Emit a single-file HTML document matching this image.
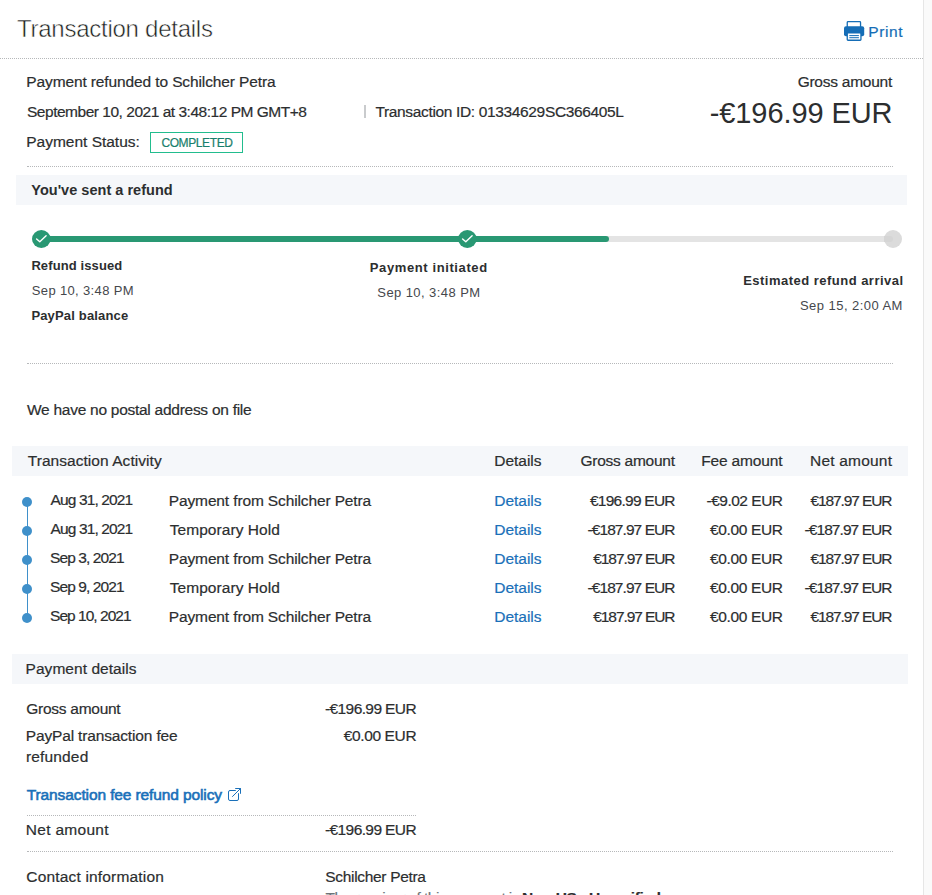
<!DOCTYPE html>
<html lang="en">
<head>
<meta charset="utf-8">
<title>Transaction details</title>
<style>
  html, body { margin: 0; padding: 0; }
  body {
    width: 932px; height: 895px; overflow: hidden; position: relative;
    background: #fff; color: #2c2e2f;
    font-family: "Liberation Sans", sans-serif; font-size: 15px;
  }
  .t { position: absolute; margin: 0; white-space: nowrap; text-decoration: none; -webkit-text-stroke: 0.2px currentColor; }
  .ic { position: absolute; }
  .dot-line { position: absolute; height: 0; border-top: 1px dotted #b6b8ba; }
  .bar { position: absolute; background: #f5f7fa; height: 30px; }
  .scroll-strip { position: absolute; left: 923px; top: 0; width: 9px; height: 895px; background: #fafafa; border-left: 1px solid #e6e6e6; box-sizing: border-box; }
  .bullet { position: absolute; left: 22px; width: 10px; height: 10px; border-radius: 50%; background: #3f90ca; }
  .badge { position: absolute; left: 150px; top: 132px; width: 93px; height: 21px; box-sizing: border-box; border: 1px solid #22bd8e; }
  .track { position: absolute; top: 236px; height: 6px; border-radius: 3px; }
</style>
</head>
<body>
<div class="scroll-strip"></div>

<header>
  <h1 class="t" style="left:17.02px;top:14px;font-size:24px;line-height:30px;letter-spacing:-0.257px;color:#1d1f20;font-weight:normal;-webkit-text-stroke:0.5px #fff;">Transaction details</h1>
  <svg class="ic" style="left:844px;top:20px" width="21" height="22" viewBox="0 0 21 22">
    <rect x="3.25" y="1.65" width="13.3" height="7" rx="0.8" fill="#fff" stroke="#156db6" stroke-width="1.3"/>
    <rect x="0" y="6.3" width="20.2" height="10" rx="2" fill="#156db6"/>
    <rect x="3.25" y="12.9" width="13.7" height="7.35" rx="0.8" fill="#fff" stroke="#156db6" stroke-width="1.3"/>
    <rect x="5.3" y="15.1" width="9.6" height="1" fill="#156db6"/>
    <rect x="5.3" y="17.2" width="9.6" height="1" fill="#156db6"/>
  </svg>
  <a class="t" href="#" style="left:868.19px;top:22px;font-size:15.5px;line-height:20px;letter-spacing:0.622px;color:#156db6;font-weight:normal;">Print</a>
  <div class="dot-line" style="left:0;top:58px;width:923px"></div>
</header>

<section>
  <div class="t" style="left:26.29px;top:72px;font-size:15.5px;line-height:20px;letter-spacing:-0.117px;color:#2c2e2f;font-weight:normal;">Payment refunded to Schilcher Petra</div>
  <div class="t" style="left:27.02px;top:102px;font-size:15.5px;line-height:20px;letter-spacing:-0.48px;color:#2c2e2f;font-weight:normal;">September 10, 2021 at 3:48:12 PM GMT+8</div>
  <div class="ic" style="left:364px;top:105px;width:1.5px;height:13px;background:#c9cbcd"></div>
  <div class="t" style="left:375.46px;top:102px;font-size:15.5px;line-height:20px;letter-spacing:-0.348px;color:#2c2e2f;font-weight:normal;">Transaction ID: 01334629SC366405L</div>
  <div class="t" style="left:26.29px;top:132px;font-size:15.5px;line-height:20px;letter-spacing:-0.015px;color:#2c2e2f;font-weight:normal;">Payment Status:</div>
  <div class="badge"></div>
  <span class="t" style="left:161.4px;top:133px;font-size:12px;line-height:20px;letter-spacing:-0.389px;color:#19806c;font-weight:normal;">COMPLETED</span>
  <div class="t" style="left:797.67px;top:72px;font-size:15.5px;line-height:20px;letter-spacing:-0.252px;color:#2c2e2f;font-weight:normal;">Gross amount</div>
  <div class="t" style="left:709.69px;top:95px;font-size:29px;line-height:36px;letter-spacing:-0.087px;color:#2c2e2f;font-weight:normal;-webkit-text-stroke:0;">-€196.99 EUR</div>
  <div class="dot-line" style="left:27px;top:166px;width:866px"></div>
</section>

<section>
  <div class="bar" style="left:16px;top:175px;width:891px"></div>
  <h2 class="t" style="left:31.27px;top:180px;font-size:14.5px;line-height:20px;letter-spacing:0.021px;color:#2c2e2f;font-weight:700;-webkit-text-stroke:0;">You've sent a refund</h2>
  <div class="track" style="left:41px;width:852px;background:#e4e4e4"></div>
  <div class="track" style="left:41px;width:568px;background:#299873"></div>
  <svg class="ic" style="left:32px;top:230px" width="19" height="18" viewBox="0 0 19 18"><ellipse cx="9.35" cy="9" rx="9.35" ry="9" fill="#299873"/><path d="M4.6 8.9 L7.8 11.8 L14.1 5.7" fill="none" stroke="#fff" stroke-width="1.4" stroke-linecap="round" stroke-linejoin="round"/></svg>
  <svg class="ic" style="left:458px;top:230px" width="19" height="18" viewBox="0 0 19 18"><ellipse cx="9.35" cy="9" rx="9.35" ry="9" fill="#299873"/><path d="M4.6 8.9 L7.8 11.8 L14.1 5.7" fill="none" stroke="#fff" stroke-width="1.4" stroke-linecap="round" stroke-linejoin="round"/></svg>
  <svg class="ic" style="left:884px;top:230px" width="18" height="18" viewBox="0 0 18 18"><circle cx="9" cy="9" r="9" fill="#dbdbdb"/><path d="M0 6 H6 a3 3 0 0 1 0 6 H0 z" fill="#d5d5d5"/></svg>
  <div class="t" style="left:31.39px;top:256px;font-size:13px;line-height:20px;letter-spacing:0.107px;color:#2c2e2f;font-weight:700;-webkit-text-stroke:0;">Refund issued</div>
  <div class="t" style="left:31.79px;top:281px;font-size:13px;line-height:20px;letter-spacing:0.353px;color:#45474c;font-weight:normal;-webkit-text-stroke:0;">Sep 10, 3:48 PM</div>
  <div class="t" style="left:31.39px;top:306px;font-size:13px;line-height:20px;letter-spacing:0.167px;color:#2c2e2f;font-weight:700;-webkit-text-stroke:0;">PayPal balance</div>
  <div class="t" style="left:369.79px;top:258px;font-size:13px;line-height:20px;letter-spacing:0.607px;color:#2c2e2f;font-weight:700;-webkit-text-stroke:0;">Payment initiated</div>
  <div class="t" style="left:377.29px;top:283px;font-size:13px;line-height:20px;letter-spacing:0.424px;color:#45474c;font-weight:normal;-webkit-text-stroke:0;">Sep 10, 3:48 PM</div>
  <div class="t" style="left:743.19px;top:271px;font-size:13px;line-height:20px;letter-spacing:0.481px;color:#2c2e2f;font-weight:700;-webkit-text-stroke:0;">Estimated refund arrival</div>
  <div class="t" style="left:799.99px;top:296px;font-size:13px;line-height:20px;letter-spacing:0.453px;color:#45474c;font-weight:normal;-webkit-text-stroke:0;">Sep 15, 2:00 AM</div>
  <div class="dot-line" style="left:27px;top:363px;width:866px"></div>
</section>

<section>
  <div class="t" style="left:27px;top:400px;font-size:15.5px;line-height:20px;letter-spacing:-0.268px;color:#2c2e2f;font-weight:normal;">We have no postal address on file</div>
</section>

<section>
  <div class="bar" style="left:12px;top:446px;width:896px"></div>
  <h2 class="t" style="left:27.76px;top:451px;font-size:15.5px;line-height:20px;letter-spacing:0.05px;color:#2c2e2f;font-weight:normal;">Transaction Activity</h2>
  <div class="t" style="left:494.29px;top:451px;font-size:15.5px;line-height:20px;letter-spacing:-0.03px;color:#2c2e2f;font-weight:normal;">Details</div>
  <div class="t" style="left:580.52px;top:451px;font-size:15.5px;line-height:20px;letter-spacing:-0.266px;color:#2c2e2f;font-weight:normal;">Gross amount</div>
  <div class="t" style="left:701.29px;top:451px;font-size:15.5px;line-height:20px;letter-spacing:-0.173px;color:#2c2e2f;font-weight:normal;">Fee amount</div>
  <div class="t" style="left:810.04px;top:451px;font-size:15.5px;line-height:20px;letter-spacing:0.198px;color:#2c2e2f;font-weight:normal;">Net amount</div>
  <div class="ic" style="left:26.5px;top:501px;width:1px;height:117px;background:#3f90ca"></div>
  <div class="row">
    <span class="bullet" style="top:496.5px"></span>
    <span class="t" style="left:50.5px;top:490px;font-size:15.5px;line-height:20px;letter-spacing:-0.872px;color:#2c2e2f;font-weight:normal;">Aug 31, 2021</span>
    <span class="t" style="left:168.79px;top:491px;font-size:15.5px;line-height:20px;letter-spacing:-0.13px;color:#2c2e2f;font-weight:normal;">Payment from Schilcher Petra</span>
    <a class="t" href="#" style="left:494.29px;top:491px;font-size:15.5px;line-height:20px;letter-spacing:-0.03px;color:#1a70b9;font-weight:normal;">Details</a>
    <span class="t" style="left:590px;top:491px;font-size:15.5px;line-height:20px;letter-spacing:-0.752px;color:#2c2e2f;font-weight:normal;">€196.99 EUR</span>
    <span class="t" style="left:706.52px;top:491px;font-size:15.5px;line-height:20px;letter-spacing:-0.496px;color:#2c2e2f;font-weight:normal;">-€9.02 EUR</span>
    <span class="t" style="left:810.5px;top:491px;font-size:15.5px;line-height:20px;letter-spacing:-1.102px;color:#2c2e2f;font-weight:normal;">€187.97 EUR</span>
  </div>
  <div class="row">
    <span class="bullet" style="top:525.5px"></span>
    <span class="t" style="left:50.5px;top:519px;font-size:15.5px;line-height:20px;letter-spacing:-0.872px;color:#2c2e2f;font-weight:normal;">Aug 31, 2021</span>
    <span class="t" style="left:169.76px;top:520px;font-size:15.5px;line-height:20px;letter-spacing:0.055px;color:#2c2e2f;font-weight:normal;">Temporary Hold</span>
    <a class="t" href="#" style="left:494.29px;top:520px;font-size:15.5px;line-height:20px;letter-spacing:-0.03px;color:#1a70b9;font-weight:normal;">Details</a>
    <span class="t" style="left:587.52px;top:520px;font-size:15.5px;line-height:20px;letter-spacing:-0.927px;color:#2c2e2f;font-weight:normal;">-€187.97 EUR</span>
    <span class="t" style="left:710px;top:520px;font-size:15.5px;line-height:20px;letter-spacing:-0.348px;color:#2c2e2f;font-weight:normal;">€0.00 EUR</span>
    <span class="t" style="left:804.52px;top:520px;font-size:15.5px;line-height:20px;letter-spacing:-0.927px;color:#2c2e2f;font-weight:normal;">-€187.97 EUR</span>
  </div>
  <div class="row">
    <span class="bullet" style="top:554.5px"></span>
    <span class="t" style="left:50.02px;top:548px;font-size:15.5px;line-height:20px;letter-spacing:-0.899px;color:#2c2e2f;font-weight:normal;">Sep 3, 2021</span>
    <span class="t" style="left:168.79px;top:549px;font-size:15.5px;line-height:20px;letter-spacing:-0.13px;color:#2c2e2f;font-weight:normal;">Payment from Schilcher Petra</span>
    <a class="t" href="#" style="left:494.29px;top:549px;font-size:15.5px;line-height:20px;letter-spacing:-0.03px;color:#1a70b9;font-weight:normal;">Details</a>
    <span class="t" style="left:593.25px;top:549px;font-size:15.5px;line-height:20px;letter-spacing:-1.077px;color:#2c2e2f;font-weight:normal;">€187.97 EUR</span>
    <span class="t" style="left:710px;top:549px;font-size:15.5px;line-height:20px;letter-spacing:-0.348px;color:#2c2e2f;font-weight:normal;">€0.00 EUR</span>
    <span class="t" style="left:810.5px;top:549px;font-size:15.5px;line-height:20px;letter-spacing:-1.102px;color:#2c2e2f;font-weight:normal;">€187.97 EUR</span>
  </div>
  <div class="row">
    <span class="bullet" style="top:583.5px"></span>
    <span class="t" style="left:50.02px;top:577px;font-size:15.5px;line-height:20px;letter-spacing:-0.899px;color:#2c2e2f;font-weight:normal;">Sep 9, 2021</span>
    <span class="t" style="left:169.76px;top:578px;font-size:15.5px;line-height:20px;letter-spacing:0.055px;color:#2c2e2f;font-weight:normal;">Temporary Hold</span>
    <a class="t" href="#" style="left:494.29px;top:578px;font-size:15.5px;line-height:20px;letter-spacing:-0.03px;color:#1a70b9;font-weight:normal;">Details</a>
    <span class="t" style="left:587.52px;top:578px;font-size:15.5px;line-height:20px;letter-spacing:-0.927px;color:#2c2e2f;font-weight:normal;">-€187.97 EUR</span>
    <span class="t" style="left:710px;top:578px;font-size:15.5px;line-height:20px;letter-spacing:-0.348px;color:#2c2e2f;font-weight:normal;">€0.00 EUR</span>
    <span class="t" style="left:804.52px;top:578px;font-size:15.5px;line-height:20px;letter-spacing:-0.927px;color:#2c2e2f;font-weight:normal;">-€187.97 EUR</span>
  </div>
  <div class="row">
    <span class="bullet" style="top:612.5px"></span>
    <span class="t" style="left:50.02px;top:606px;font-size:15.5px;line-height:20px;letter-spacing:-0.964px;color:#2c2e2f;font-weight:normal;">Sep 10, 2021</span>
    <span class="t" style="left:168.79px;top:607px;font-size:15.5px;line-height:20px;letter-spacing:-0.13px;color:#2c2e2f;font-weight:normal;">Payment from Schilcher Petra</span>
    <a class="t" href="#" style="left:494.29px;top:607px;font-size:15.5px;line-height:20px;letter-spacing:-0.03px;color:#1a70b9;font-weight:normal;">Details</a>
    <span class="t" style="left:593.25px;top:607px;font-size:15.5px;line-height:20px;letter-spacing:-1.077px;color:#2c2e2f;font-weight:normal;">€187.97 EUR</span>
    <span class="t" style="left:710px;top:607px;font-size:15.5px;line-height:20px;letter-spacing:-0.348px;color:#2c2e2f;font-weight:normal;">€0.00 EUR</span>
    <span class="t" style="left:810.5px;top:607px;font-size:15.5px;line-height:20px;letter-spacing:-1.102px;color:#2c2e2f;font-weight:normal;">€187.97 EUR</span>
  </div>
</section>

<section>
  <div class="bar" style="left:12px;top:654px;width:896px"></div>
  <h2 class="t" style="left:25.59px;top:659px;font-size:15.5px;line-height:20px;letter-spacing:0.044px;color:#2c2e2f;font-weight:normal;">Payment details</h2>
  <div class="t" style="left:26.27px;top:699px;font-size:15.5px;line-height:20px;letter-spacing:-0.27px;color:#2c2e2f;font-weight:normal;">Gross amount</div>
  <div class="t" style="left:325.02px;top:699px;font-size:15.5px;line-height:20px;letter-spacing:-0.6px;color:#2c2e2f;font-weight:normal;">-€196.99 EUR</div>
  <div class="t" style="left:25.79px;top:726px;font-size:15.5px;line-height:20px;letter-spacing:-0.155px;color:#2c2e2f;font-weight:normal;">PayPal transaction fee</div>
  <div class="t" style="left:26.03px;top:747px;font-size:15.5px;line-height:20px;letter-spacing:0.15px;color:#2c2e2f;font-weight:normal;">refunded</div>
  <div class="t" style="left:343.7px;top:726px;font-size:15.5px;line-height:20px;letter-spacing:-0.36px;color:#2c2e2f;font-weight:normal;">€0.00 EUR</div>
  <a class="t" href="#" style="left:26.76px;top:785px;font-size:15.5px;line-height:20px;letter-spacing:-0.111px;color:#1a70b9;font-weight:normal;-webkit-text-stroke:0.6px #1a70b9;">Transaction fee refund policy</a>
  <svg class="ic" style="left:228px;top:788px" width="14" height="14" viewBox="0 0 14 14" fill="none" stroke="#1a70b9" stroke-width="1" stroke-linecap="round" stroke-linejoin="round">
    <path d="M7.4 2.5 H2 a1.5 1.5 0 0 0 -1.5 1.5 V11 a1.5 1.5 0 0 0 1.5 1.5 H9 a1.5 1.5 0 0 0 1.5 -1.5 V5.6"/>
    <path d="M4.5 8.5 L12.5 0.5 M7.6 0.5 H12.5 V5.4"/>
  </svg>
  <div class="dot-line" style="left:27px;top:815px;width:389px"></div>
  <div class="t" style="left:25.79px;top:820px;font-size:15.5px;line-height:20px;letter-spacing:0.292px;color:#2c2e2f;font-weight:normal;">Net amount</div>
  <div class="t" style="left:325.02px;top:820px;font-size:15.5px;line-height:20px;letter-spacing:-0.6px;color:#2c2e2f;font-weight:normal;">-€196.99 EUR</div>
  <div class="dot-line" style="left:27px;top:851px;width:866px"></div>
  <div class="t" style="left:26.27px;top:867px;font-size:15.5px;line-height:20px;letter-spacing:0.178px;color:#2c2e2f;font-weight:normal;">Contact information</div>
  <div class="t" style="left:325.32px;top:867px;font-size:15.5px;line-height:20px;letter-spacing:-0.323px;color:#2c2e2f;font-weight:normal;">Schilcher Petra</div>
  <span class="t" style="left:325.56px;top:888px;font-size:15.5px;line-height:20px;letter-spacing:-0.571px;color:#6c7378;font-weight:normal;">The receiver of this payment is</span>
  <b class="t" style="left:522.03px;top:888px;font-size:15.5px;line-height:20px;letter-spacing:-0.413px;color:#2c2e2f;font-weight:700;">Non-US - Unverified</b>
</section>
</body>
</html>
